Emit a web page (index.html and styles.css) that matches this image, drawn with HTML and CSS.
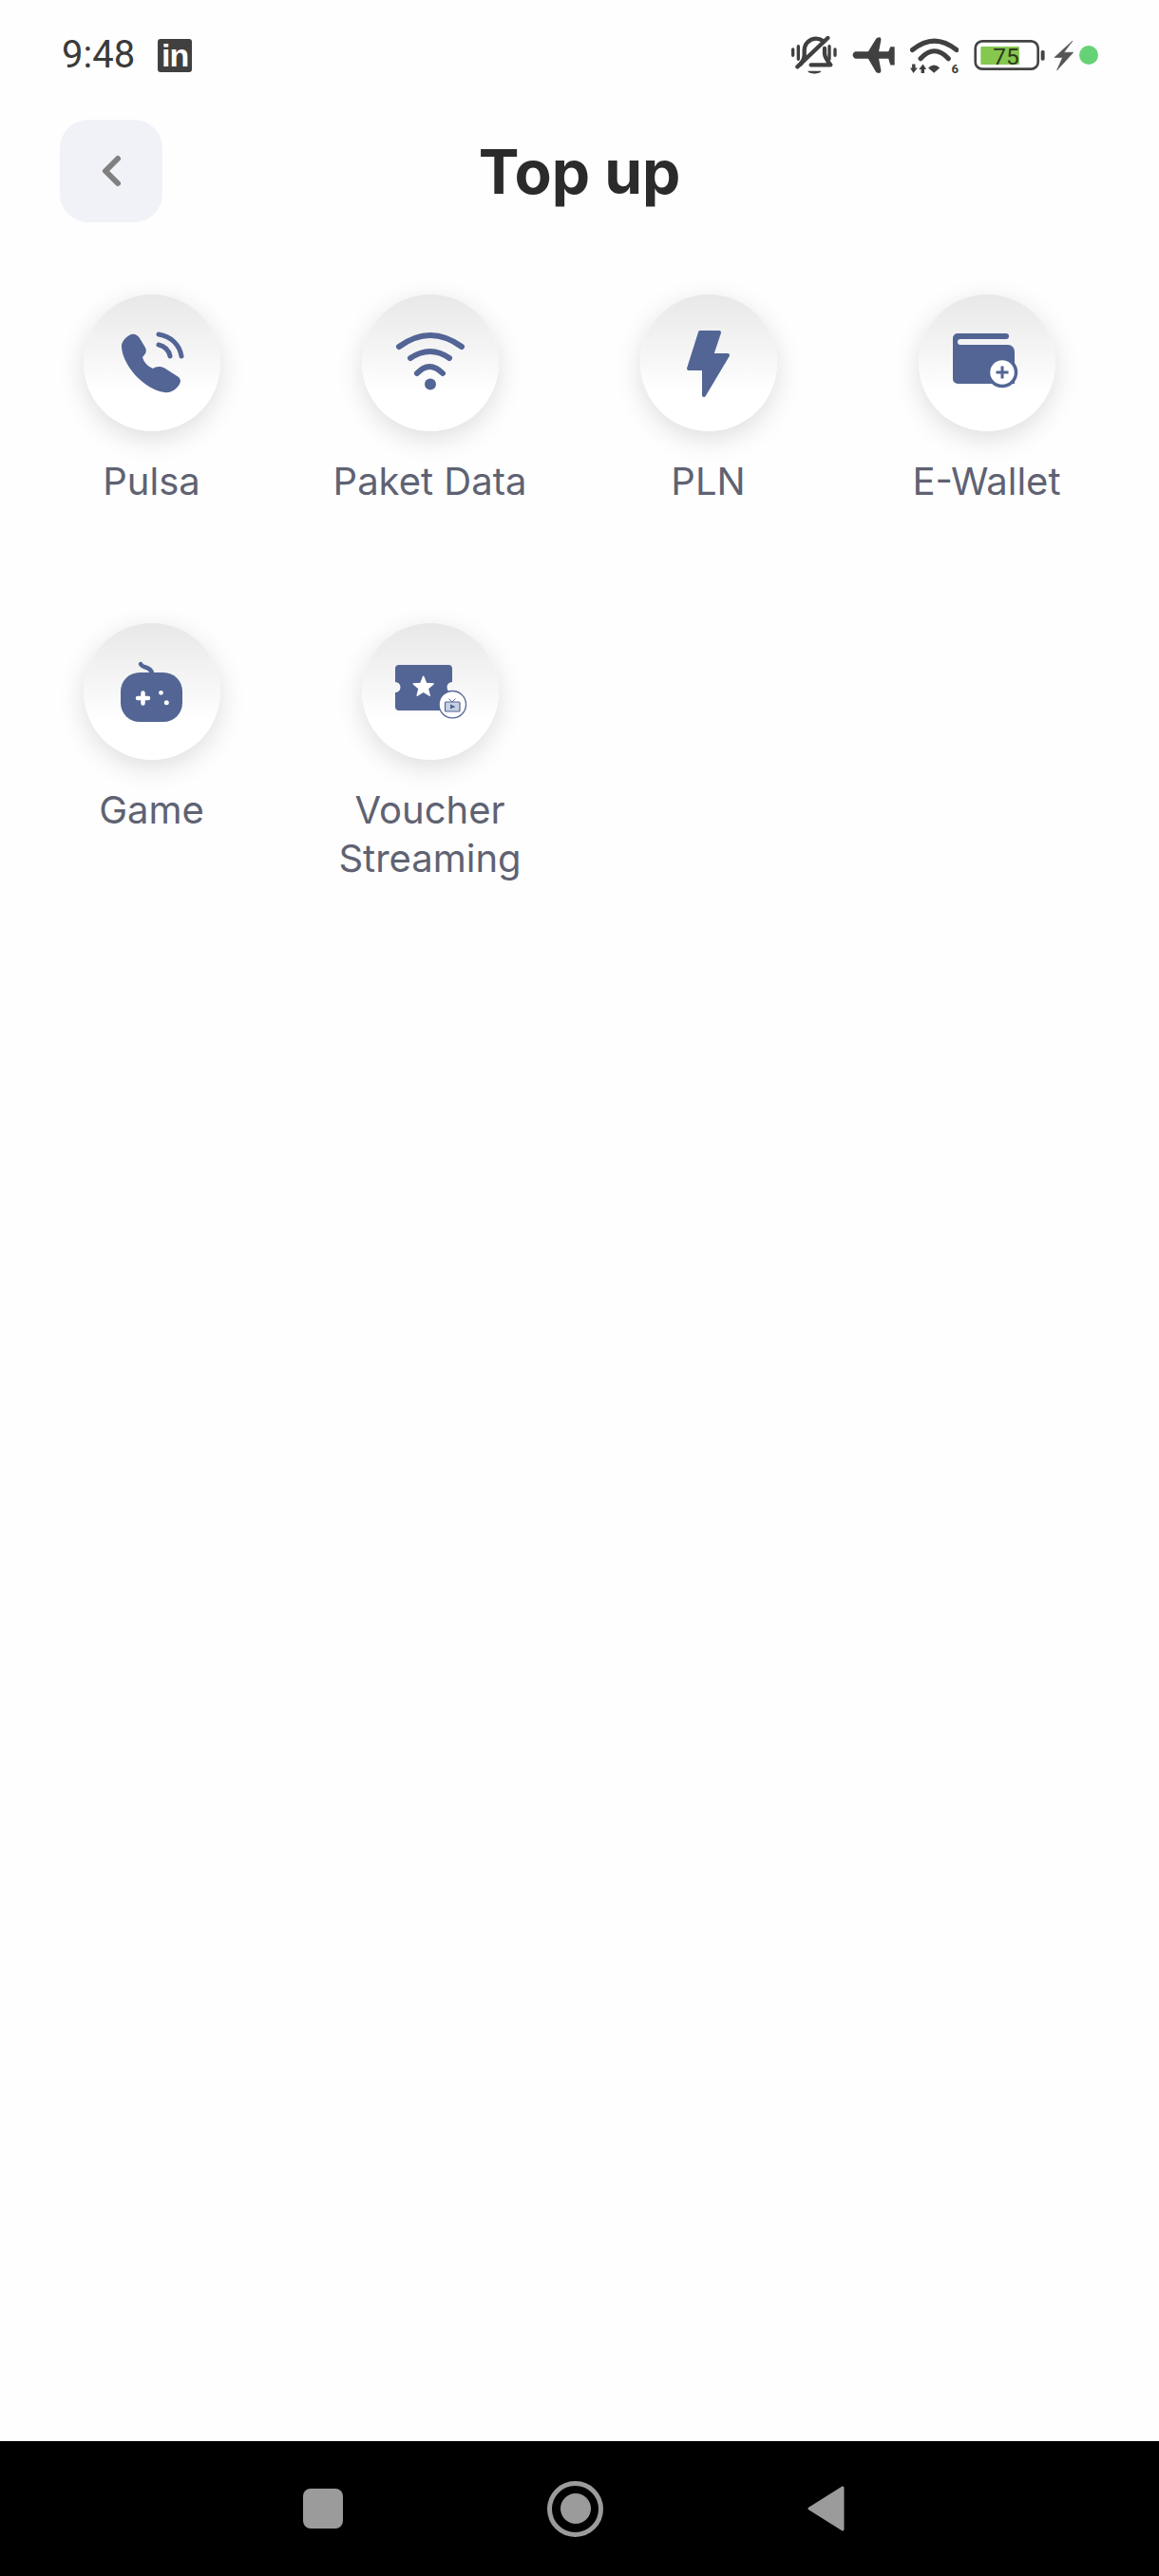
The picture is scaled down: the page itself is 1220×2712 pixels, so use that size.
FILE: index.html
```html
<!DOCTYPE html>
<html>
<head>
<title>Top up</title>
<meta http-equiv="content-type" content="text/html; charset=utf-8" />
<link rel="stylesheet" href="styles.css">
</head>
<body>

<div class="status-bar">
	<div class="status-left">
		<span class="clock">9:48</span>
		<span class="linkedin">in</span>
	</div>
	<div class="status-right">
		<svg class="ic-bell" viewBox="98 85 144 120">
			<g fill="none" stroke="#404040" stroke-width="13" stroke-linecap="round" stroke-linejoin="round">
				<path d="M103 127V146M120 117V158M236 127V146M218 117V158" stroke-width="10"/>
				<path d="M139 150V130C139 108 157 93 176 93C185 93 191 95 197 100"/>
				<path d="M203 124V140C203 152 213 165 222 176H160"/>
				<path d="M139 150C137 160 132 166 127 174"/>
				<path d="M117 182L213 91"/>
			</g>
			<path d="M150 195H192C190 206 152 206 150 195Z" fill="#404040"/>
		</svg>
		<svg class="ic-plane" viewBox="295 85 133 115">
			<path d="M304 130H345L370 89Q385 81 385 93L378 130H408L414 115H427V172H414L408 152H378L385 190Q385 201 370 195L345 152H304Q289 141 304 130Z" fill="#404040"/>
		</svg>
		<div class="wifi-wrap">
			<svg class="ic-wifi" viewBox="478 88 150 115">
				<g fill="none" stroke="#404040" stroke-width="15" stroke-linecap="round">
					<path d="M485 128Q553 72 622 128"/>
					<path d="M510 155Q553 108 597 155"/>
				</g>
				<path d="M534 184Q552 166 570 184L552 199Z" fill="#404040"/>
				<path d="M494 172V184H501L488 200L478 184H484V172ZM512 200V188H505L518 172L528 188H522V200Z" fill="#404040"/>
			</svg>
			<span class="wifi-gen">6</span>
		</div>
		<svg class="ic-battery" viewBox="678 93 228 97">
			<rect x="682" y="97" width="200" height="89" rx="22" fill="none" stroke="#444444" stroke-width="8"/>
			<rect x="699" y="114" width="123" height="58" rx="3" fill="#86c750"/>
			<rect x="891" y="126" width="12" height="33" rx="5" fill="#444444"/>
			<text class="batt-level" x="780" y="172">75</text>
		</svg>
		<div class="status-charge">
			<svg class="ic-charge" viewBox="928 97 62 94">
				<path d="M988 97L930 150H956L938 191L990 134H960Z" fill="#555555" stroke="#555555" stroke-width="2" stroke-linejoin="round"/>
			</svg>
			<span class="dot"></span>
		</div>
	</div>
</div>

<div class="top-bar">
	<div class="back-btn">
		<svg class="ic-back" viewBox="0 0 24 36">
			<path d="M19 5L6 18L19 31" fill="none" stroke="#808080" stroke-width="6" stroke-linecap="round" stroke-linejoin="round"/>
		</svg>
	</div>
	<h1 class="title">Top up</h1>
</div>

<div class="menu-grid">
	<div class="menu-item">
		<div class="menu-circle">
			<svg class="menu-icon" viewBox="0 0 144 144">
				<path d="M40 56C39 50 45 44 50 42C54 41 57 43 59 46L65 56C67 60 65 63 62 66C63 71 68 76 73 78C76 76 81 75 86 78L100 87C103 90 102 93 100 96C96 101 91 104 85 103C64 100 42 76 40 56Z" fill="#536595"/>
				<path d="M79 42C92 44 101 53 103 65M79 53C85 54 90 59 91 65" fill="none" stroke="#536595" stroke-width="5" stroke-linecap="round"/>
			</svg>
		</div>
		<div class="menu-label">Pulsa</div>
	</div>
	<div class="menu-item">
		<div class="menu-circle">
			<svg class="menu-icon" viewBox="0 0 144 144">
				<path d="M39 55Q72 31 105 55M51 67Q72 53 92 67M58 83Q71 69 85 83" fill="none" stroke="#536595" stroke-width="6" stroke-linecap="round"/>
				<circle cx="72" cy="94.5" r="6" fill="#536595"/>
			</svg>
		</div>
		<div class="menu-label">Paket Data</div>
	</div>
	<div class="menu-item">
		<div class="menu-circle">
			<svg class="menu-icon" viewBox="0 0 144 144">
				<path d="M63 40H83L75 64H92L67 106L67 78H51Z" fill="#536595" stroke="#536595" stroke-width="4" stroke-linejoin="round"/>
			</svg>
		</div>
		<div class="menu-label">PLN</div>
	</div>
	<div class="menu-item">
		<div class="menu-circle">
			<svg class="menu-icon" viewBox="0 0 144 144">
				<path d="M41 41H92A3 3 0 0 1 92 47H44A2.8 2.8 0 0 0 44 53H94A7 7 0 0 1 101 60V94H41A5 5 0 0 1 36 89V46A5 5 0 0 1 41 41Z" fill="#536595"/>
				<circle cx="88" cy="82" r="14.5" fill="#ffffff" stroke="#536595" stroke-width="3.5"/>
				<path d="M81.5 82H94.5M88 75.5V88.5" stroke="#536595" stroke-width="3"/>
			</svg>
		</div>
		<div class="menu-label">E-Wallet</div>
	</div>
	<div class="menu-item">
		<div class="menu-circle">
			<svg class="menu-icon" viewBox="0 0 144 144">
				<path d="M60 43C62 48 71 45 72 53" fill="none" stroke="#536595" stroke-width="4.5" stroke-linecap="round"/>
				<rect x="39" y="52" width="65" height="52" rx="20" fill="#536595"/>
				<path d="M57 79H68M62.5 73.5V84.500" stroke="#ffffff" stroke-width="4.5" stroke-linecap="round"/>
				<circle cx="81.500" cy="73.300" r="2.400" fill="#ffffff"/>
				<circle cx="87.300" cy="83.700" r="2.500" fill="#ffffff"/>
			</svg>
		</div>
		<div class="menu-label">Game</div>
	</div>
	<div class="menu-item">
		<div class="menu-circle">
			<svg class="menu-icon" viewBox="0 0 144 144">
				<path d="M39 44H91A4 4 0 0 1 95 48V62A5.400 5.400 0 0 0 95 73V88A4 4 0 0 1 91 92H39A4 4 0 0 1 35 88V73A5.400 5.400 0 0 0 35 62V48A4 4 0 0 1 39 44Z" fill="#536595"/>
				<polygon points="64.700,56.300 67.500,63.400 75.200,63.900 69.300,68.800 71.200,76.200 64.700,72.100 58.200,76.200 60.100,68.800 54.200,63.900 61.900,63.400" fill="#ffffff" stroke="#ffffff" stroke-width="1.500" stroke-linejoin="round"/>
				<circle cx="95.300" cy="85.700" r="14.200" fill="#ffffff" stroke="#536595" stroke-width="1.300"/>
				<rect x="87.500" y="83" width="15.500" height="10" rx="1" fill="#c7cfe2" stroke="#536595" stroke-width="1.200"/>
				<path d="M91.500 79.500L95 83L98.500 79.500" fill="none" stroke="#536595" stroke-width="1"/>
				<path d="M93 85.500L98.500 88L93 90.500Z" fill="#536595"/>
			</svg>
		</div>
		<div class="menu-label">Voucher Streaming</div>
	</div>
</div>

<div class="nav-bar">
	<span class="nav-square"></span>
	<span class="nav-home"><span class="nav-home-inner"></span></span>
	<svg class="nav-back" viewBox="0 0 39 48">
		<path d="M37 2L2 24L37 46Z" fill="#9b9b9b" stroke="#9b9b9b" stroke-width="3" stroke-linejoin="round"/>
	</svg>
</div>

</body>
</html>
```

FILE: styles.css
```css
html, body {margin: 0; padding: 0;}
body {width: 1220px; height: 2712px; display: flex; flex-direction: column; background-color: #fefefe; font-family: Inter, "Liberation Sans", sans-serif; overflow: hidden;}

.status-bar {height: 116px; padding: 0 64px 0 65px; display: flex; align-items: center; justify-content: space-between; flex-shrink: 0;}
.status-left {display: flex; align-items: center; gap: 24px;}
.clock {font-family: Roboto, sans-serif; font-size: 40px; color: #3a3a3a; line-height: 40px;}
.linkedin {width: 36px; height: 35px; display: flex; align-items: center; justify-content: center; background-color: #404040; border-radius: 3px; color: #ffffff; font-family: "Liberation Sans", sans-serif; font-weight: bold; font-size: 34px; line-height: 35px; letter-spacing: -1px;}
.status-right {display: flex; align-items: center; gap: 16px;}
.status-charge {display: flex; align-items: center; gap: 6px; margin-left: -8px;}
.ic-bell {width: 48px; height: 40px;}
.ic-plane {width: 45px; height: 39px;}
.wifi-wrap {position: relative; width: 51px; height: 39px;}
.ic-wifi {display: block; width: 51px; height: 39px;}
.wifi-gen {position: absolute; right: 0; bottom: -1px; font-family: Roboto, sans-serif; font-weight: bold; font-size: 13px; line-height: 13px; color: #404040;}
.ic-battery {width: 76px; height: 32px;}
.ic-charge {width: 21px; height: 31px;}
.dot {width: 20px; height: 20px; border-radius: 50%; background-color: #66d276;}
.batt-level {font-family: Roboto, sans-serif; font-size: 74px; fill: #2b3a1e; text-anchor: middle;}

.top-bar {height: 108px; margin: 10px 63px 0; display: grid; grid-template-columns: 108px 1fr 108px; align-items: center; flex-shrink: 0;}
.back-btn {width: 108px; height: 108px; border-radius: 30px; background-color: #f1f2f8; display: flex; align-items: center; justify-content: center;}
.ic-back {width: 24px; height: 36px;}
.title {margin: 2px 0 0; text-align: center; font-size: 64px; font-weight: 700; color: #2b2b2b; line-height: 72px;}

.menu-grid {margin-top: 76px; padding: 0 13px; display: grid; grid-template-columns: repeat(4, 293px); row-gap: 124px; align-content: start; flex: 1;}
.menu-item {display: flex; flex-direction: column; align-items: center;}
.menu-circle {width: 144px; height: 144px; border-radius: 50%; background: linear-gradient(180deg, #e8e8e8 0%, #f6f6f6 45%, #ffffff 72%); box-shadow: 0 8px 28px rgba(0, 0, 0, 0.13);}
.menu-icon {display: block; width: 144px; height: 144px;}
.menu-label {margin-top: 27px; width: 250px; text-align: center; font-size: 40px; line-height: 51px; color: #5f6272;}

.nav-bar {height: 142px; padding-left: 319px; display: flex; align-items: center; gap: 215px; background-color: #000000; flex-shrink: 0;}
.nav-square {width: 42px; height: 42px; border-radius: 8px; background-color: #9b9b9b;}
.nav-home {width: 59px; height: 59px; box-sizing: border-box; border: 5px solid #9b9b9b; border-radius: 50%; display: flex; align-items: center; justify-content: center;}
.nav-home-inner {width: 32px; height: 32px; border-radius: 50%; background-color: #9b9b9b;}
.nav-back {width: 39px; height: 48px;}
```
